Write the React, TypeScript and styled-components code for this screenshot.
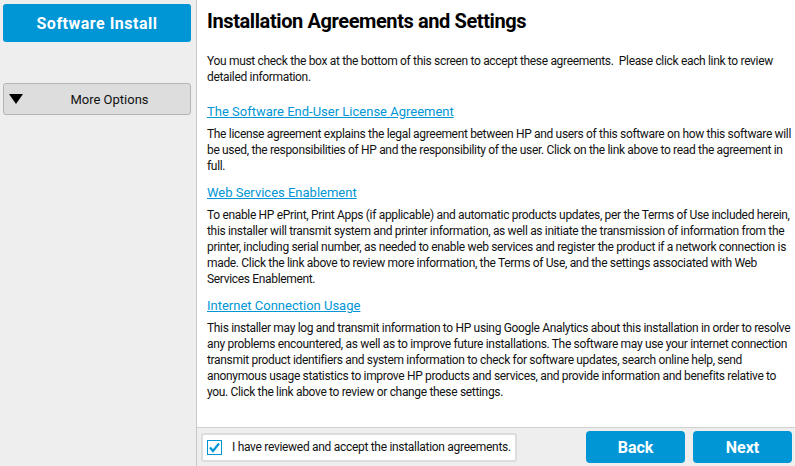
import React from "react";
import styled, { createGlobalStyle } from "styled-components";

const Global = createGlobalStyle`
  html, body { margin: 0; padding: 0; background: #ffffff; }
  body { font-family: Roboto, "Liberation Sans", sans-serif; }
  * { box-sizing: border-box; }
`;

const Shell = styled.div`
  display: grid;
  grid-template-columns: 197px 1fr;
  width: 795px;
  height: 466px;
  overflow: hidden;
`;

const Sidebar = styled.aside`
  background: #eeeeee;
  border-right: 1px solid #c8c8c8;
  display: flex;
  flex-direction: column;
  padding: 4px 5px 0 3px;
  gap: 41px;
`;

const PrimaryNav = styled.div`
  height: 38px;
  background: #0096d6;
  border-radius: 3px;
  color: #ffffff;
  font-weight: 700;
  font-size: 16px;
  letter-spacing: 0.5px;
  display: flex;
  align-items: center;
  justify-content: center;
`;

const OptionsButton = styled.div`
  height: 32px;
  background: #dddddd;
  border: 1px solid #b4b4b4;
  border-radius: 3px;
  display: flex;
  align-items: center;
  padding-left: 5px;
  font-size: 13px;
  color: #111;
`;

const Caret = styled.span`
  width: 0;
  height: 0;
  border-left: 7px solid transparent;
  border-right: 7px solid transparent;
  border-top: 10px solid #000;
`;

const OptionsLabel = styled.span`
  flex: 1;
  text-align: center;
  padding-left: 6px;
`;

const Main = styled.main`
  display: flex;
  flex-direction: column;
  min-width: 0;
`;

const Content = styled.section`
  flex: 1;
  padding: 8px 2px 0 10px;
  color: #111;
`;

const Title = styled.h1`
  margin: 0 0 19px 0;
  font-size: 20px;
  font-weight: 700;
  line-height: 26px;
  letter-spacing: -0.4px;
  color: #000;
`;

const Para = styled.p`
  margin: 0;
  font-size: 12px;
  line-height: 16px;
  letter-spacing: -0.33px;
  white-space: nowrap;
`;

const Section = styled.div<{ $gap?: number }>`
  margin-top: ${(p) => p.$gap ?? 10}px;
`;

const LinkTitle = styled.a`
  display: block;
  color: #0096d6;
  text-decoration: underline;
  font-size: 13px;
  line-height: 18px;
  margin-bottom: 5px;
  cursor: pointer;
`;

const Footer = styled.footer`
  height: 39px;
  background: #eeeeee;
  border-top: 1px solid #cfcfcf;
  display: flex;
  align-items: center;
  padding: 0 3px 0 4px;
  gap: 8px;
`;

const AcceptBox = styled.label`
  width: 316px;
  height: 29px;
  background: #ffffff;
  border: 2px solid #dddddd;
  border-radius: 3px;
  display: flex;
  align-items: center;
  gap: 10px;
  padding-left: 4px;
  font-size: 12px;
  letter-spacing: -0.3px;
  white-space: nowrap;
  color: #111;
  margin-right: auto;
`;

const Check = styled.span`
  flex: none;
  width: 15px;
  height: 15px;
  border: 1px solid #0096d6;
  background: #fff;
  display: flex;
  align-items: center;
  justify-content: center;
`;

const ActionButton = styled.button`
  width: 99px;
  height: 32px;
  border: none;
  border-radius: 4px;
  background: #0096d6;
  color: #ffffff;
  font-family: Roboto, "Liberation Sans", sans-serif;
  font-weight: 700;
  font-size: 16px;
  cursor: pointer;
`;

const Lines = ({ lines }: { lines: string[] }) => (
  <Para>
    {lines.map((l, i) => (
      <React.Fragment key={i}>
        {i > 0 && <br />}
        {l}
      </React.Fragment>
    ))}
  </Para>
);

const sections = [
  {
    title: "The Software End-User License Agreement",
    gap: 18,
    lines: [
      "The license agreement explains the legal agreement between HP and users of this software on how this software will",
      "be used, the responsibilities of HP and the responsibility of the user. Click on the link above to read the agreement in",
      "full.",
    ],
  },
  {
    title: "Web Services Enablement",
    lines: [
      "To enable HP ePrint, Print Apps (if applicable) and automatic products updates, per the Terms of Use included herein,",
      "this installer will transmit system and printer information, as well as initiate the transmission of information from the",
      "printer, including serial number, as needed to enable web services and register the product if a network connection is",
      "made. Click the link above to review more information, the Terms of Use, and the settings associated with Web",
      "Services Enablement.",
    ],
  },
  {
    title: "Internet Connection Usage",
    lines: [
      "This installer may log and transmit information to HP using Google Analytics about this installation in order to resolve",
      "any problems encountered, as well as to improve future installations. The software may use your internet connection",
      "transmit product identifiers and system information to check for software updates, search online help, send",
      "anonymous usage statistics to improve HP products and services, and provide information and benefits relative to",
      "you. Click the link above to review or change these settings.",
    ],
  },
];

export default function App() {
  return (
    <>
      <Global />
      <Shell>
        <Sidebar>
          <PrimaryNav>Software Install</PrimaryNav>
          <OptionsButton>
            <Caret />
            <OptionsLabel>More Options</OptionsLabel>
          </OptionsButton>
        </Sidebar>
        <Main>
          <Content>
            <Title>Installation Agreements and Settings</Title>
            <Lines
              lines={[
                "You must check the box at the bottom of this screen to accept these agreements.\u00a0 Please click each link to review",
                "detailed information.",
              ]}
            />
            {sections.map((s) => (
              <Section key={s.title} $gap={s.gap}>
                <LinkTitle>{s.title}</LinkTitle>
                <Lines lines={s.lines} />
              </Section>
            ))}
          </Content>
          <Footer>
            <AcceptBox>
              <Check>
                <svg width="13" height="13" viewBox="0 0 13 13">
                  <path d="M2 6.5 L5 10 L11 2.5" fill="none" stroke="#0096d6" strokeWidth="2.2" />
                </svg>
              </Check>
              I have reviewed and accept the installation agreements.
            </AcceptBox>
            <ActionButton>Back</ActionButton>
            <ActionButton>Next</ActionButton>
          </Footer>
        </Main>
      </Shell>
    </>
  );
}
